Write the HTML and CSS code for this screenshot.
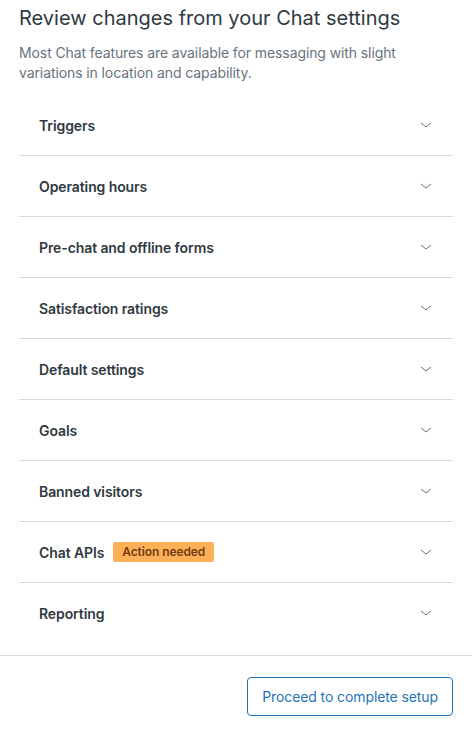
FILE: index.html
```html
<!DOCTYPE html>
<html>
<head>
<meta charset="utf-8">
<link rel="stylesheet" href="styles.css">
</head>
<body>
<div class="page">
  <div class="content">
    <h1 class="title">Review changes from your Chat settings</h1>
    <p class="desc">Most Chat features are available for messaging with slight variations in location and capability.</p>
    <ul class="list">
      <li class="row"><span class="label">Triggers</span><svg class="chev" viewBox="0 0 12 12"><path d="M1 4l5 4 5-4"/></svg></li>
      <li class="row"><span class="label">Operating hours</span><svg class="chev" viewBox="0 0 12 12"><path d="M1 4l5 4 5-4"/></svg></li>
      <li class="row"><span class="label">Pre-chat and offline forms</span><svg class="chev" viewBox="0 0 12 12"><path d="M1 4l5 4 5-4"/></svg></li>
      <li class="row"><span class="label">Satisfaction ratings</span><svg class="chev" viewBox="0 0 12 12"><path d="M1 4l5 4 5-4"/></svg></li>
      <li class="row"><span class="label">Default settings</span><svg class="chev" viewBox="0 0 12 12"><path d="M1 4l5 4 5-4"/></svg></li>
      <li class="row"><span class="label">Goals</span><svg class="chev" viewBox="0 0 12 12"><path d="M1 4l5 4 5-4"/></svg></li>
      <li class="row"><span class="label">Banned visitors</span><svg class="chev" viewBox="0 0 12 12"><path d="M1 4l5 4 5-4"/></svg></li>
      <li class="row"><span class="label">Chat APIs <span class="badge">Action needed</span></span><svg class="chev" viewBox="0 0 12 12"><path d="M1 4l5 4 5-4"/></svg></li>
      <li class="row"><span class="label">Reporting</span><svg class="chev" viewBox="0 0 12 12"><path d="M1 4l5 4 5-4"/></svg></li>
    </ul>
  </div>
  <div class="footer">
    <button class="btn">Proceed to complete setup</button>
  </div>
</div>
</body>
</html>
```

FILE: styles.css
```css
* { box-sizing: border-box; }
html, body { margin: 0; padding: 0; background: #fff; }
body {
  font-family: Inter, "Noto Sans", "Liberation Sans", sans-serif;
  color: #2f3941;
}
.page { width: 472px; }
.content { padding: 4px 19px 0 19px; }
.title {
  margin: 0;
  font-size: 20px;
  font-weight: 400;
  line-height: 28px;
  color: #2f3941;
}
.desc {
  margin: 11px 0 0 0;
  font-size: 14px;
  line-height: 20px;
  color: #68737d;
  letter-spacing: -0.1px;
}
.list { list-style: none; margin: 12px 0 0 0; padding: 0; }
.row {
  height: 61px;
  display: flex;
  align-items: center;
  justify-content: space-between;
  padding: 0 21px 0 20px;
  border-bottom: 1px solid #d8dcde;
}
.row:last-child { border-bottom: none; height: 72px; padding-bottom: 12px; }
.label {
  font-size: 14px;
  font-weight: 600;
  color: #2f3941;
  display: flex;
  align-items: center;
  letter-spacing: -0.1px;
}
.badge {
  margin-left: 9px;
  background: #ffb057;
  color: #703b15;
  font-size: 12px;
  font-weight: 600;
  line-height: 20px;
  padding: 0 9px;
  border-radius: 2px;
}
.chev {
  width: 12px;
  height: 12px;
  fill: none;
  stroke: #68737d;
  stroke-width: 1;
}
.footer {
  border-top: 1px solid #d8dcde;
  display: flex;
  justify-content: flex-end;
  padding: 21px 19px 0 0;
}
.btn {
  font-family: inherit;
  height: 39px;
  padding: 0 14px;
  border: 1px solid #1f73b7;
  border-radius: 4px;
  background: #fff;
  color: #1f73b7;
  font-size: 14px;
  letter-spacing: -0.1px;
}
```
